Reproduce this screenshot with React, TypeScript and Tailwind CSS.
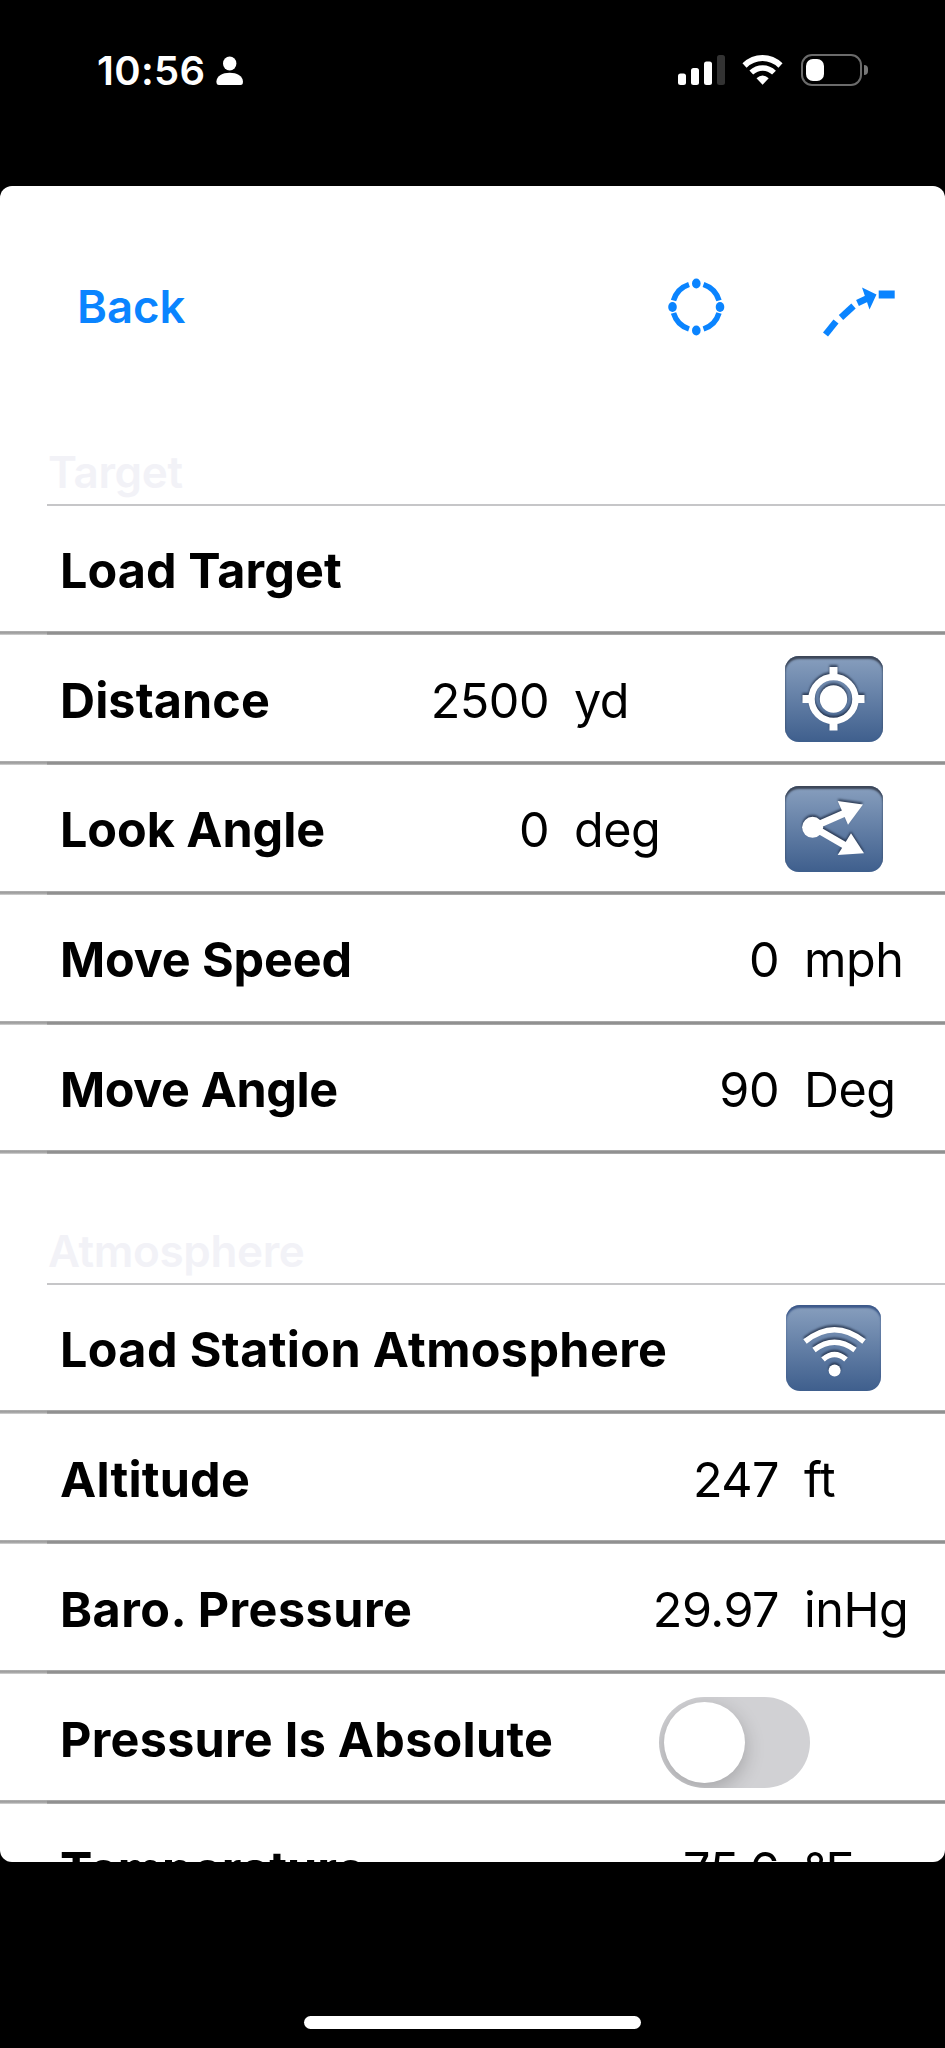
import React from 'react';

type RowIcon = 'target' | 'angle' | 'station';

interface RowData {
  label: string;
  labelClass: string;
  value?: string;
  unit?: string;
  icon?: RowIcon;
  toggle?: boolean;
}

interface SectionProps {
  title: string;
  headerClass: string;
  rows: RowData[];
}

const targetRows: RowData[] = [
  { label: 'Load Target', labelClass: 'tracking-[0.1px]' },
  { label: 'Distance', labelClass: 'tracking-[0.1px]', value: '2500', unit: 'yd', icon: 'target' },
  { label: 'Look Angle', labelClass: 'tracking-[-0.05px]', value: '0', unit: 'deg', icon: 'angle' },
  { label: 'Move Speed', labelClass: 'tracking-[-0.15px]', value: '0', unit: 'mph' },
  { label: 'Move Angle', labelClass: 'tracking-[-0.4px]', value: '90', unit: 'Deg' },
];

const atmosphereRows: RowData[] = [
  { label: 'Load Station Atmosphere', labelClass: 'tracking-[0.36px]', icon: 'station' },
  { label: 'Altitude', labelClass: 'tracking-[0.2px]', value: '247', unit: 'ft' },
  { label: 'Baro. Pressure', labelClass: 'tracking-[0.48px]', value: '29.97', unit: 'inHg' },
  { label: 'Pressure Is Absolute', labelClass: 'tracking-[0.27px]', toggle: true },
  { label: 'Temperature', labelClass: 'tracking-[0.1px]', value: '75.6', unit: '°F' },
];

const StatusBar: React.FC = () => (
  <div className="flex h-[186px] shrink-0 items-start pt-[54px] pl-[97px]">
    <span className="h-8 w-[119px] text-[40px] leading-[33px] font-semibold tracking-[0.3px] text-white">10:56</span>
    <svg className="mt-[2px] h-[30px] w-7" viewBox="0 0 28 30" fill="white">
      <ellipse cx="13.7" cy="7.5" rx="6.7" ry="7" />
      <path d="M.4 25.5C.8 20 6.5 16.8 13.7 16.8S26.6 20 27 25.5Q27 29 24.5 29H3Q.4 29 .4 25.5Z" />
    </svg>
    <svg className="mt-px ml-[434px] h-[30px] w-12" viewBox="0 0 48 30" fill="white">
      <rect x="0" y="18.5" width="8" height="11.5" rx="2.5" />
      <rect x="13" y="13" width="8" height="17" rx="2.5" />
      <rect x="26" y="6.5" width="8" height="23.5" rx="2.5" />
      <rect x="39" y="0" width="8" height="30" rx="2.5" fill="#333" />
    </svg>
    <svg className="mt-px ml-4 h-[30px] w-[42px]" viewBox="0 0 42 30" fill="none" stroke="white">
      <path d="M2.5 10.5C13 .6 28 .6 38.5 10.5" strokeWidth="6" />
      <path d="M9.3 17.6C16 11.3 25.5 11.3 32 17.6" strokeWidth="5.5" />
      <path d="M14.5 23.2Q20.6 18 26.7 23.2L20.6 29.8Z" fill="white" stroke="none" />
    </svg>
    <div className="ml-[17px] flex items-center">
      <div className="h-8 w-[61px] rounded-[11px] border-2 border-[#6b6b6b] p-[3px]">
        <div className="h-[22px] w-[18px] rounded-[7px] bg-white" />
      </div>
      <div className="ml-[2px] h-[10px] w-[4px] rounded-r-full bg-[#777]" />
    </div>
  </div>
);

const NavBar: React.FC = () => (
  <div className="flex h-[241px] items-center pl-[77px] text-[#0a84ff]">
    <span className="w-[587px] pt-[2px] text-[45.5px] font-semibold">Back</span>
    <svg className="h-16 w-16" viewBox="0 0 64 64" fill="currentColor">
      <g fill="none" stroke="currentColor" strokeWidth="5.5">
        <path d="M9.5 25.5A24 24 0 0 1 25 9.5" />
        <path d="M39.5 9.5A24 24 0 0 1 55 25.5" />
        <path d="M55 38A24 24 0 0 1 39.5 54" />
        <path d="M25 54A24 24 0 0 1 9.5 38" />
      </g>
      <ellipse cx="32.3" cy="8.5" rx="4.3" ry="5" />
      <ellipse cx="32.3" cy="55.5" rx="4.3" ry="5" />
      <ellipse cx="8.5" cy="32" rx="4.3" ry="5" />
      <ellipse cx="56" cy="32" rx="4.3" ry="5" />
    </svg>
    <svg className="ml-[92px] h-16 w-20" viewBox="0 0 80 64" fill="currentColor">
      <g fill="none" stroke="currentColor" strokeWidth="6.5">
        <path d="M5.5 59.5L16 46.5" />
        <path d="M21 42.5L33.5 31" />
        <path d="M37.5 28L47 23.5" />
        <path d="M58.7 19.5H74.7" strokeWidth="8" />
      </g>
      <path d="M42 12.5L56.5 19.5L49.5 34.5Z" />
    </svg>
  </div>
);

const icons: Record<RowIcon, React.ReactNode> = {
  target: (
    <>
      <circle cx="48.5" cy="43" r="22" fill="none" stroke="white" strokeWidth="6.5" />
      <circle cx="48.5" cy="43" r="13.7" fill="white" />
      <path
        d="M44.5 11h8v9h-8zM44.5 65.5h8v9h-8zM17.5 39h9v8h-9zM70.5 39h9v8h-9z"
        fill="white"
      />
    </>
  ),
  angle: (
    <>
      <g fill="none" stroke="white" strokeWidth="7">
        <path d="M28 41L60 27" />
        <path d="M28 41L60 59.5" />
      </g>
      <circle cx="27.6" cy="41.3" r="10.5" fill="white" />
      <path d="M52.7 15L78 18.5L63 38.7Z" fill="white" />
      <path d="M66 47.3L79 67.3L52.7 69Z" fill="white" />
    </>
  ),
  station: (
    <>
      <g fill="none" stroke="white" strokeWidth="5.5">
        <path d="M19 36.5Q48.5 13 78 36.5" />
        <path d="M28 45Q48.5 29.5 69 45" />
        <path d="M37 54.5Q48.5 44.5 60 54.5" />
      </g>
      <circle cx="48.6" cy="65.5" r="6" fill="white" />
    </>
  ),
};

const IconButton: React.FC<{ icon: RowIcon }> = ({ icon }) => (
  <button
    className={`mb-[2px] h-[86px] shrink-0 rounded-[14px] bg-linear-to-b from-[#889fbe] to-[#3f5f8d] ${
      icon === 'station'
        ? 'w-[95px] shadow-[inset_0_3px_2px_#3d598a]'
        : 'w-[98px] shadow-[inset_0_3px_2px_#3c4657,inset_0_0_2px_#3f5f8d]'
    }`}
  >
    <svg
      className="h-[86px] w-[98px] drop-shadow-[0_-2px_1px_rgba(25,38,60,0.75)]"
      viewBox="0 0 98 86"
    >
      {icons[icon]}
    </svg>
  </button>
);

const Toggle: React.FC = () => (
  <div className="mt-[7px] h-[91px] w-[151px] overflow-hidden rounded-full bg-[#d1d1d4] p-[5px]">
    <div className="h-[81px] w-[81px] rounded-full bg-white shadow-[0_6px_20px_rgba(0,0,0,0.22)]" />
  </div>
);

const Row: React.FC<{ row: RowData }> = ({ row }) => {
  // Rows with an instrument button keep their value in a narrower column
  const leftWidth = row.toggle ? 'w-[659px]' : row.icon === 'station' ? 'w-[786px]' : row.icon ? 'w-[549px]' : 'w-[779px]';

  return (
    <div className="flex h-[129.9px] flex-col">
      <div className="flex min-h-0 flex-1 items-center pt-1 text-[48.5px] leading-none whitespace-nowrap text-black">
        <div className={`flex shrink-0 justify-between pt-[2px] pl-[60px] ${leftWidth}`}>
          <span className={`font-bold ${row.labelClass}`}>{row.label}</span>
          {row.value && <span className="tracking-[-0.5px]">{row.value}</span>}
        </div>
        {row.unit && (
          <span className={`ml-[25px] pt-[2px] tracking-[-0.5px] ${row.icon ? 'w-[211px]' : ''}`}>{row.unit}</span>
        )}
        {row.icon && <IconButton icon={row.icon} />}
        {row.toggle && <Toggle />}
      </div>
      <div className="flex h-1 shrink-0">
        <div className="w-[47px] bg-linear-to-b from-[#b4b4b4] via-[#999] to-[#d8d8d8]" />
        <div className="flex-1 bg-linear-to-b from-[#b4b4b4] via-[#858585] to-[#b4b4b4]" />
      </div>
    </div>
  );
};

const Section: React.FC<SectionProps> = ({ title, headerClass, rows }) => (
  <section>
    <div className={`flex items-end ${headerClass}`}>
      <div className="ml-[47px] flex-1 border-b-2 border-[#c6c6c8] pb-[5px] pl-px text-[44px] leading-[54px] font-semibold tracking-[-0.35px] text-[#f2f2f7]">
        {title}
      </div>
    </div>
    <div className="-mt-px">
      {rows.map((row) => (
        <Row key={row.label} row={row} />
      ))}
    </div>
  </section>
);

const App: React.FC = () => {
  return (
    <div className="flex h-[2048px] w-[945px] flex-col overflow-hidden bg-black font-['Inter',sans-serif]">
      <StatusBar />
      <main className="h-[1676px] shrink-0 overflow-hidden rounded-[12px] bg-white">
        <NavBar />
        <Section title="Target" headerClass="h-[79px]" rows={targetRows} />
        <Section title="Atmosphere" headerClass="h-[131px]" rows={atmosphereRows} />
      </main>
      {/* Home indicator */}
      <div className="mt-[154px] ml-[304px] h-[13px] w-[337px] rounded-full bg-white" />
    </div>
  );
};

export default App;
